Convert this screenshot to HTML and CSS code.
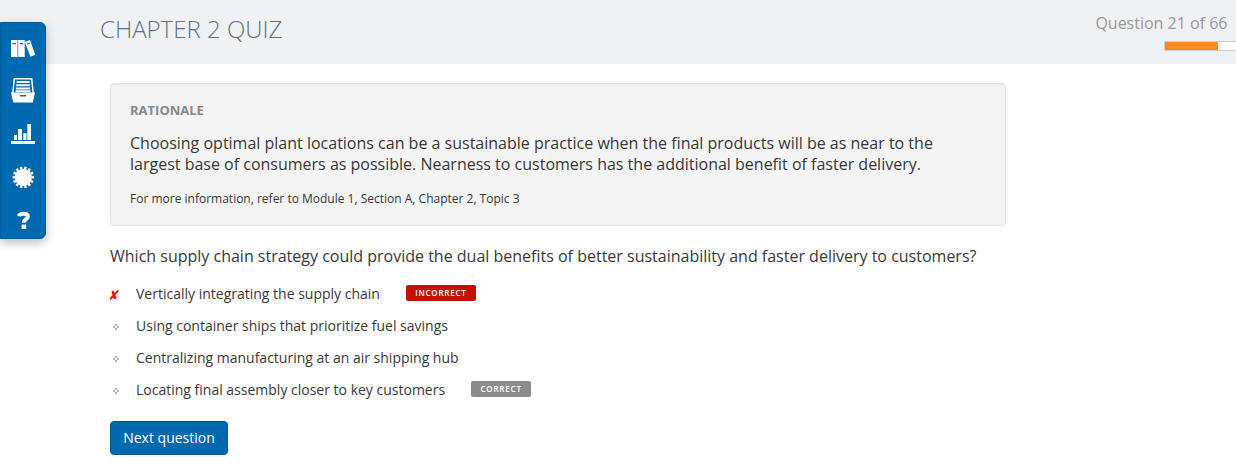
FILE: index.html
```html
<!DOCTYPE html>
<html lang="en">
<head>
<meta charset="utf-8">
<title>Chapter 2 Quiz</title>
<link rel="stylesheet" href="styles.css">
</head>
<body>
<header class="header">
  <h1 class="title">CHAPTER 2 QUIZ</h1>
  <div class="progress">
    <div class="progress-label">Question 21 of 66</div>
    <div class="progress-track"><div class="progress-fill"></div></div>
  </div>
</header>
<nav class="sidebar">
  <a class="nav-item"><svg width="26" height="26" viewBox="0 0 26 26" fill="#fff"><path fill-rule="evenodd" d="M1 5h6.500v17H1zM2.500 8v1.200h3.500V8zM8.200 5h6.500v17H8.200zM9.700 8v1.200h3.500V8zM14.700 7l5.300-1.900 5.200 14.700-4.700 1.900zM16.700 8.700l.4 1.100 2.900-1.100-.4-1.100z"/></svg></a>
  <a class="nav-item"><svg width="26" height="26" viewBox="0 0 26 26"><path d="M2.800 15L4.300.8h17.400L23.200 15" fill="none" stroke="#fff" stroke-width="1.500"/><path d="M6.500 4h13M6.200 7.200h13.600M5.900 10.400h14.200M5.600 13.200h14.800" stroke="#fff" stroke-width="2"/><path fill="#fff" fill-rule="evenodd" d="M1 14.600h24L22.800 24.600H3.200zM10 17v1.400h6V17z"/></svg></a>
  <a class="nav-item"><svg width="26" height="26" viewBox="0 0 26 26" fill="#fff"><path d="M1 20h24v3H1zM4 14h3v5H4zM8 8h4v11H8zM13.300 12.300h3.200V19h-3.200zM17.300 3H21v16h-3.700z"/></svg></a>
  <a class="nav-item"><svg width="26" height="26" viewBox="0 0 26 26"><circle cx="13.300" cy="13.300" r="8.600" fill="#fff"/><circle cx="13.300" cy="13.300" r="9.500" fill="none" stroke="#fff" stroke-width="2.600" pathLength="140" stroke-dasharray="5.600 4.400" stroke-dashoffset="2.800"/></svg></a>
  <a class="nav-item"><svg width="26" height="26" viewBox="0 0 26 26"><path d="M9.200 9.200C9.500 7.300 11.300 6.700 13.600 6.700c2.700 0 4.300.9 4.300 2.900 0 2.800-4.100 2.500-4.100 6.100" fill="none" stroke="#fff" stroke-width="4"/><path fill="#fff" d="M11.600 17.600h4.600v4.400h-4.600z"/></svg></a>
</nav>
<main class="content">
  <section class="rationale">
    <h2 class="rationale-title">RATIONALE</h2>
    <p class="rationale-text">Choosing optimal plant locations can be a sustainable practice when the final products will be as near to the<br>largest base of consumers as possible. Nearness to customers has the additional benefit of faster delivery.</p>
    <p class="rationale-ref">For more information, refer to Module 1, Section A, Chapter 2, Topic 3</p>
  </section>
  <p class="question">Which supply chain strategy could provide the dual benefits of better sustainability and faster delivery to customers?</p>
  <ul class="options">
    <li class="option"><span class="mark wrong">✘</span><span class="answer">Vertically integrating the supply chain</span><span class="badge incorrect">INCORRECT</span></li>
    <li class="option"><svg class="mark" width="8" height="8" viewBox="0 0 8 8"><use href="#dots"/></svg><span class="answer">Using container ships that prioritize fuel savings</span></li>
    <li class="option"><svg class="mark" width="8" height="8" viewBox="0 0 8 8"><use href="#dots"/></svg><span class="answer">Centralizing manufacturing at an air shipping hub</span></li>
    <li class="option"><svg class="mark" width="8" height="8" viewBox="0 0 8 8"><g id="dots" fill="#b4b4b4"><path d="M3 1h2v2H3zM3 5h2v2H3zM1 3h2v2H1zM5 3h2v2H5z"/></g></svg><span class="answer">Locating final assembly closer to key customers</span><span class="badge correct">CORRECT</span></li>
  </ul>
  <button class="next">Next question</button>
</main>
</body>
</html>
```

FILE: styles.css
```css
* { box-sizing: border-box; }
body {
  margin: 0;
  height: 474px;
  overflow: hidden;
  background: #fff;
  color: #383838;
  font-family: "Open Sans", sans-serif;
  white-space: nowrap;
}
h1, h2, p, ul { margin: 0; padding: 0; }
.header {
  display: flex;
  justify-content: space-between;
  height: 64px;
  padding-left: 100px;
  background: #eff1f5;
}
.title {
  padding-top: 12px;
  color: #66717a;
  font-size: 24px;
  font-weight: 300;
  line-height: 33px;
}
.progress {
  display: flex;
  flex-direction: column;
  align-items: flex-end;
  padding-top: 12px;
}
.progress-label {
  padding-right: 8.5px;
  color: #999;
  font-size: 16px;
  line-height: 22px;
}
.progress-track {
  width: 72px;
  height: 10px;
  margin-top: 7px;
  border: 1px solid #ccc;
  border-right: 0;
  border-radius: 2px 0 0 2px;
  background: #fff;
}
.progress-fill {
  width: 53px;
  height: 8px;
  background: #f58e1e;
}
.sidebar {
  position: absolute;
  top: 22px;
  left: 0;
  display: flex;
  flex-direction: column;
  align-items: center;
  gap: 17px;
  width: 46px;
  height: 217px;
  padding-top: 12px;
  border: 1px solid #005b98;
  border-radius: 0 6px 6px 0;
  background: #0069b0;
  box-shadow: 0 4px 10px rgba(0, 0, 0, .25);
}
.nav-item { display: block; height: 26px; }
.nav-item svg { display: block; }
.content { padding: 19px 0 0 110px; }
.rationale {
  width: 896px;
  height: 143px;
  padding: 17px 19px;
  border: 1px solid #e2e2e2;
  border-radius: 4px;
  background: #f4f4f4;
  box-shadow: inset 0 1px 1px rgba(0, 0, 0, .05);
}
.rationale-title {
  color: #888;
  font-size: 13px;
  font-weight: 700;
  line-height: 18px;
}
.rationale-text {
  margin-top: 14px;
  font-size: 16px;
  line-height: 21px;
}
.rationale-ref {
  margin-top: 16px;
  font-size: 12px;
  line-height: 16px;
}
.question {
  margin-top: 19px;
  font-size: 16px;
  line-height: 22px;
}
.options { padding-top: 11px; list-style: none; }
.option {
  display: flex;
  align-items: center;
  height: 32px;
}
.mark {
  flex: none;
  width: 8px;
  margin: 2px 16px 0 2px;
}
.wrong {
  margin: 2px 19px 0 -1px;
  color: #f00;
  font: 12px/14px "DejaVu Sans", sans-serif;
  transform: skewX(-10deg) scaleY(1.15);
}
.answer { font-size: 14px; line-height: 20px; }
.badge {
  height: 16px;
  margin-bottom: 2px;
  border-radius: 2px;
  color: #fff;
  font-size: 8px;
  font-weight: 600;
  line-height: 16px;
  letter-spacing: .8px;
  text-align: center;
}
.incorrect { width: 70px; margin-left: 26px; background: #c41200; }
.correct { width: 60px; margin-left: 26px; background: #8c8c8c; }
.next {
  display: block;
  width: 118px;
  height: 34px;
  margin-top: 15px;
  padding: 0 0 2px;
  border: 1px solid #005487;
  border-radius: 4px;
  background: #0069b0;
  color: #fff;
  font: 14px "Open Sans", sans-serif;
}
```
